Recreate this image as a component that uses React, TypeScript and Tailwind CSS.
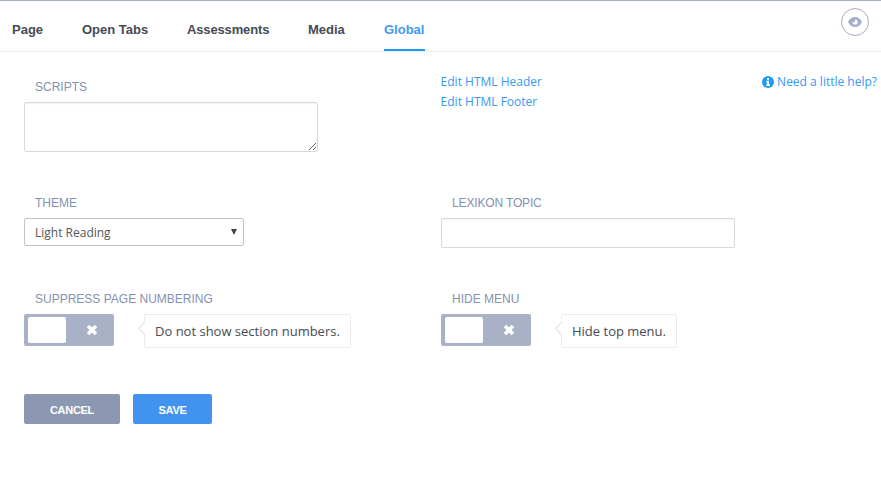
import type { ReactNode } from 'react';

const tabs = [
  { name: 'Page', width: 'w-[31px]' },
  { name: 'Open Tabs', width: 'w-[66px]' },
  { name: 'Assessments', width: 'w-[82px] tracking-[-0.14px]' },
  { name: 'Media', width: 'w-[37px]' },
  { name: 'Global', width: 'w-[41px]' },
];

function Label({ children }: { children: ReactNode }) {
  return (
    <div className="h-4 pl-[11px] font-['Liberation_Sans',Arial,sans-serif] text-[12px] leading-4 whitespace-nowrap text-[#8491b0]">
      {children}
    </div>
  );
}

function Toggle({ hint }: { hint: string }) {
  return (
    <div className="flex items-start">
      <button className="flex h-8 w-[90px] items-center rounded-[2px] bg-[#a8b1c6] pl-1">
        <span className="h-[26px] w-[38px] rounded-[2px] bg-white" />
        <svg className="ml-5 h-3 w-3" viewBox="0 0 12 12">
          <path d="M2 2 10 10M10 2 2 10" stroke="white" strokeWidth="3.6" />
        </svg>
      </button>
      <div className="relative ml-[30px] h-[34px] rounded-[2px] border border-[#ebebeb] px-2.5 text-[13px] leading-8 whitespace-nowrap text-[#454b54]">
        <svg className="absolute top-[6px] -left-[7px] h-[15px] w-[7px]" viewBox="0 0 7 15">
          <path d="M7 .8 .9 7.5 7 14.2" fill="white" stroke="#e6e6e6" strokeWidth="1.3" />
        </svg>
        {hint}
      </div>
    </div>
  );
}

function EyeIcon() {
  return (
    <svg className="h-[10px] w-[14px]" viewBox="0 0 14 10">
      <path d="M0 5C1.6 1.700 4.100 0 7 0s5.400 1.700 7 5c-1.600 3.300-4.100 5-7 5S1.600 8.300 0 5z" fill="currentColor" />
      <circle cx="7" cy="5" r="2.600" fill="white" />
      <path d="M4 2h3.100v1.500A1.800 1.800 0 0 1 5.400 5.300H4z" fill="currentColor" />
    </svg>
  );
}

function InfoIcon() {
  return (
    <svg className="h-3 w-3" viewBox="0 0 12 12">
      <circle cx="6" cy="6" r="6" fill="#1c9cf5" />
      <path d="M5 2h2v1.700H5zM4.200 4.800H7V8.500h.9V10H4.200V8.500h.9V6.200h-.9z" fill="white" />
    </svg>
  );
}

export default function App() {
  return (
    <div className="h-[484px] w-[881px] overflow-hidden border-t border-[#a5aec6] bg-white font-['Open_Sans',sans-serif]">
      <header className="flex h-[51px] justify-between border-b border-[#ebebeb] pr-3 pl-3">
        <nav className="flex gap-[39px] font-['Liberation_Sans',Arial,sans-serif] text-[13px] font-bold">
          {tabs.map((tab) => (
            <a
              key={tab.name}
              className={`h-[50px] pt-[19px] leading-5 whitespace-nowrap ${tab.width} ${
                tab.name === 'Global' ? 'border-b-2 border-[#1c9cf5] text-[#3d9bf5]' : 'text-[#454b54]'
              }`}
            >
              {tab.name}
            </a>
          ))}
        </nav>
        <button className="mt-[7px] flex h-7 w-7 items-center justify-center rounded-full border border-[#a5aec6] text-[#a5aec6]">
          <EyeIcon />
        </button>
      </header>

      <main className="grid grid-cols-[417px_1fr] grid-rows-[116px_96px_103px_30px] pt-[27px] pl-6">
        <section>
          <Label>SCRIPTS</Label>
          <textarea className="mt-[7px] block h-[50px] w-[294px] resize rounded-[2px] border border-[#d9d9d9] shadow-[inset_0_1px_2px_rgba(0,0,0,0.06)]" />
        </section>
        <section className="-mt-[7px] flex items-start justify-between pr-1 text-[12px] leading-5 text-[#3598f5]">
          <div className="-ml-[0.4px] flex flex-col">
            <a>Edit HTML Header</a>
            <a>Edit HTML Footer</a>
          </div>
          <a className="flex items-center gap-[3px] whitespace-nowrap">
            <InfoIcon />
            Need a little help?
          </a>
        </section>

        <section>
          <Label>THEME</Label>
          <button className="mt-[7px] flex h-7 w-[220px] items-center justify-between rounded-[2px] border border-[#c4c4c4] pr-[6px] pl-2.5 text-[12px] text-[#555]">
            <span className="pt-0.5">Light Reading</span>
            <svg className="h-[6px] w-[6px]" viewBox="0 0 6 6">
              <path d="M0 0h6L3 6z" fill="#444" />
            </svg>
          </button>
        </section>
        <section>
          <Label><span className="tracking-[-0.15px]">LEXIKON TOPIC</span></Label>
          <input className="mt-[7px] block h-[30px] w-[294px] rounded-[2px] border border-[#d9d9d9] shadow-[inset_0_1px_2px_rgba(0,0,0,0.06)]" />
        </section>

        <section>
          <Label>SUPPRESS PAGE NUMBERING</Label>
          <div className="mt-[7px]"><Toggle hint="Do not show section numbers." /></div>
        </section>
        <section>
          <Label>HIDE MENU</Label>
          <div className="mt-[7px]"><Toggle hint="Hide top menu." /></div>
        </section>

        <div className="flex gap-[13px] font-['Liberation_Sans',Arial,sans-serif] text-[11px] font-bold tracking-[-0.3px] text-white">
          <button className="h-[30px] w-24 rounded-[2px] bg-[#8c97b2] pt-0.5">CANCEL</button>
          <button className="h-[30px] w-[79px] rounded-[2px] bg-[#4293f0] pt-0.5">SAVE</button>
        </div>
      </main>
    </div>
  );
}
